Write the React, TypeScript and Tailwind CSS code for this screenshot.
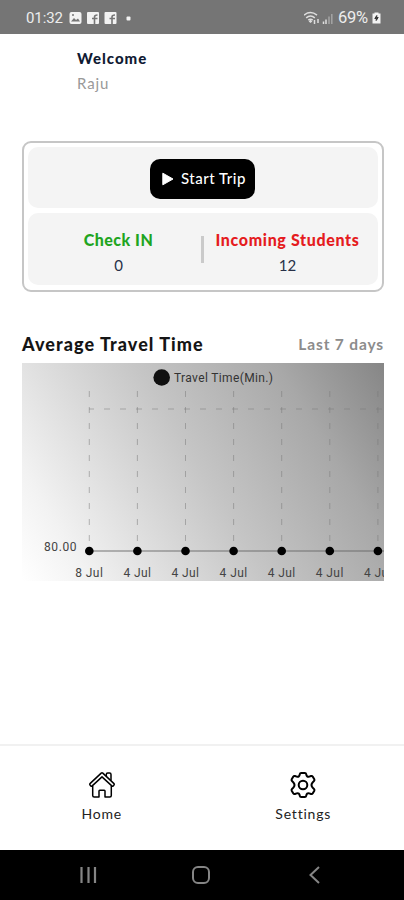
import React from "react";

const points = ["8 Jul", "4 Jul", "4 Jul", "4 Jul", "4 Jul", "4 Jul", "4 Jul"];

const StatusBar = () => (
    <header className="flex h-[33.5px] shrink-0 items-center justify-between bg-[#757575] pl-[26px] pr-[23px] pt-[3px] text-[#ededed]">
        <div className="flex items-center">
            <span className="w-[43px] font-['Roboto'] text-[15px] tracking-[-0.1px]">01:32</span>
            <svg width="62" height="14" viewBox="0 0 62 14" fill="#f2f2f2">
                <rect x="0.5" y="1" width="12" height="12" rx="2" />
                <path d="M2 10.5 L5 7 L7 9 L9 7.5 L11 10.5 Z" fill="#757575" />
                <circle cx="4" cy="4" r="1" fill="#757575" />
                <rect x="18" y="1" width="12" height="12" rx="1" />
                <path d="M25.5 13 V6 Q25.5 4 28.5 4 M23 7.5 H28.5" fill="none" stroke="#757575" strokeWidth="1.6" />
                <rect x="35.5" y="1" width="12" height="12" rx="1" />
                <path d="M43 13 V6 Q43 4 46 4 M40.5 7.5 H46" fill="none" stroke="#757575" strokeWidth="1.6" />
                <rect x="57.5" y="5.5" width="4" height="4" rx="1" />
            </svg>
        </div>
        <div className="flex items-center">
            <svg width="35" height="16" viewBox="0 0 35 16" fill="none" stroke="#dedede" strokeWidth="1.5">
                <path d="M0 5.2 Q6.5 0 13 5.2 M2.2 7.8 Q6.5 4.2 10.8 7.8 M4.3 10.2 Q6.5 8.4 8.7 10.2" />
                <path d="M6.5 9.5 L8.3 11.4 L6.5 13 L4.7 11.4 Z" fill="#dedede" stroke="none" />
                <path d="M10.5 10 V14 M14 9 V13" />
                <path d="M19.5 11.5 V14 M22 9.5 V14" />
                <path d="M25 6.5 V14 M27.8 4 V14" stroke="#a5a5a5" />
            </svg>
            <span className="-ml-px w-[34px] font-['Roboto'] text-[16.5px] tracking-[-0.3px]">69%</span>
            <svg width="9" height="12" viewBox="0 0 9 12">
                <path d="M2.5 0.5 H6.5 V1.5 H8.5 V11.5 H0.5 V1.5 H2.5 Z" fill="#f2f2f2" />
                <path d="M4.8 3.5 L2.8 6.5 H4.4 L4.2 8.5 L6.2 5.5 H4.6 Z" fill="#333" stroke="#333" />
            </svg>
        </div>
    </header>
);

const TravelChart = () => (
    <svg className="block" width="362" height="218" viewBox="0 0 362 218" fontFamily="Roboto, sans-serif" fontSize="12">
        <defs>
            <linearGradient id="chartBg" gradientUnits="userSpaceOnUse" x1="0" y1="218" x2="362" y2="0">
                <stop offset="0" stopColor="#ffffff" />
                <stop offset="0.14" stopColor="#f2f2f2" />
                <stop offset="0.5" stopColor="#c5c5c5" />
                <stop offset="0.78" stopColor="#a8a8a8" />
                <stop offset="1" stopColor="#868686" />
            </linearGradient>
        </defs>
        <rect width="362" height="218" fill="url(#chartBg)" />
        <circle cx="139.7" cy="14.5" r="8.3" fill="#101010" />
        <text x="152" y="18.5" textLength="99" fill="#333">Travel Time(Min.)</text>
        <path d="M67 46 H362" stroke="#777" strokeOpacity="0.5" strokeDasharray="6 10" strokeDashoffset="1" />
        {points.map((_, i) => (
            <path key={i} d={`M${67.3 + i * 48.1} 28 V188`} stroke="#777" strokeOpacity="0.5" strokeDasharray="6 10" />
        ))}
        <path d="M67 188 H362" stroke="#666" strokeOpacity="0.6" strokeWidth="1.6" />
        <text x="22" y="188" textLength="32.5" fill="#444">80.00</text>
        {points.map((label, i) => (
            <g key={i}>
                <circle cx={67.3 + i * 48.1} cy="188" r="4.3" fill="#000" />
                <text x={53.3 + i * 48.1} y="213.5" textLength="27.5" fill="#444">{label}</text>
            </g>
        ))}
    </svg>
);

const HomeIcon = () => (
    <svg width="28" height="28" viewBox="0 0 28 28" fill="none" stroke="#000" strokeWidth="1.5" strokeLinejoin="round">
        <path d="M13.2 2.1 Q14 1.5 14.8 2.1 L26 12.6 Q26.6 13.3 26 14 L25.2 14.9 Q24.5 15.5 23.8 14.9 L14 5.9 L4.2 14.9 Q3.5 15.5 2.8 14.9 L2 14 Q1.4 13.3 2 12.6 Z" />
        <path d="M4.7 15 V24.5 Q4.7 26 6.2 26 H11 V20 Q11 19.2 11.8 19.2 H16.2 Q17 19.2 17 20 V26 H21.8 Q23.3 26 23.3 24.5 V15" />
        <path d="M18.3 5.1 V3.6 Q18.3 2 19.7 2 H21.6 Q23 2 23 3.6 V9.4" />
    </svg>
);

const SettingsIcon = () => (
    <svg width="28" height="28" viewBox="0 0 28 28" fill="none" stroke="#000" strokeWidth="2" strokeLinejoin="round">
        <circle cx="14" cy="14" r="4.3" />
        <path d="M12.2 2 H15.8 Q17 2 17.2 3.2 Q17.6 6.4 20.3 5.6 L22 5 Q23.2 4.7 23.8 5.7 L25.3 8.3 Q25.8 9.3 25 10.1 L23.8 11.2 Q21.2 14 23.8 16.8 L25 17.9 Q25.8 18.7 25.3 19.7 L23.8 22.3 Q23.2 23.3 22 23 L20.3 22.4 Q17.6 21.6 17.2 24.8 Q17 26 15.8 26 H12.2 Q11 26 10.8 24.8 Q10.4 21.6 7.7 22.4 L6 23 Q4.8 23.3 4.2 22.3 L2.7 19.7 Q2.2 18.7 3 17.9 L4.2 16.8 Q6.8 14 4.2 11.2 L3 10.1 Q2.2 9.3 2.7 8.3 L4.2 5.7 Q4.8 4.7 6 5 L7.7 5.6 Q10.4 6.4 10.8 3.2 Q11 2 12.2 2 Z" />
    </svg>
);

const App = () => {
    return (
        <div className="flex h-[900px] w-[404px] flex-col overflow-hidden bg-white font-['Lato',sans-serif]">
            <StatusBar />

            <main className="flex-1 pl-[22px] pr-5">
                <div className="pl-[55px] pt-[14px]">
                    <h1 className="text-[15px] font-black leading-5 tracking-[1px] text-[#101a33]">Welcome</h1>
                    <p className="mt-[5px] text-[15px] leading-5 tracking-[0.9px] text-[#999]">Raju</p>
                </div>

                <section className="mt-[48.5px] h-[151px] rounded-[9px] border-2 border-[#c6c6c6] px-1 pt-1">
                    <div className="flex h-[61px] items-center rounded-[10px] bg-[#f4f4f4] pl-[122px] pt-0.5">
                        <button className="flex h-10 w-[105px] items-center rounded-[10px] bg-black pl-3 text-white">
                            <svg width="12" height="14" viewBox="0 0 12 14">
                                <path d="M0.8 1.2 L11 7 L0.8 12.8 Z" fill="#fff" stroke="#fff" strokeLinejoin="round" />
                            </svg>
                            <span className="ml-[7px] whitespace-nowrap text-[15px] font-medium tracking-[0.5px]">Start Trip</span>
                        </button>
                    </div>
                    <div className="mt-[5px] flex h-[72px] items-center rounded-[10px] bg-[#f4f4f4] pt-1">
                        <div className="w-[173px] pl-[8px] pt-1 text-center">
                            <div className="text-[16px] font-black leading-6 tracking-[0.5px] text-[#1fa51f]">Check IN</div>
                            <div className="text-[15px] leading-[26px] text-[#273047]">0</div>
                        </div>
                        <div className="mb-1 h-[27px] w-[3px] shrink-0 bg-[#cacaca]" />
                        <div className="flex-1 pr-[7px] pt-1 text-center">
                            <div className="whitespace-nowrap text-[16px] font-black leading-6 tracking-[0.65px] text-[#e51b20]">Incoming Students</div>
                            <div className="text-[15px] leading-[26px] text-[#273047]">12</div>
                        </div>
                    </div>
                </section>

                <div className="mt-10 flex h-[31px] items-start justify-between whitespace-nowrap leading-6">
                    <h2 className="text-[18px] font-black tracking-[1.05px] text-[#151515]">Average Travel Time</h2>
                    <span className="text-[15.5px] font-bold tracking-[0.85px] text-[#8c8c8c]">Last 7 days</span>
                </div>
                <TravelChart />
            </main>

            <nav className="grid h-[106px] shrink-0 grid-cols-2 border-t-2 border-[#f1f1f1] pl-px pt-[25px] text-[14px] text-[#222]">
                <div className="flex flex-col items-center">
                    <HomeIcon />
                    <span className="mt-[3px] leading-6 tracking-[0.8px]">Home</span>
                </div>
                <div className="flex flex-col items-center">
                    <SettingsIcon />
                    <span className="mt-[3px] leading-6 tracking-[0.8px]">Settings</span>
                </div>
            </nav>

            <footer className="flex h-[50px] shrink-0 items-center bg-black pl-[79px]">
                <svg width="20" height="18" viewBox="0 0 20 18" stroke="#858585" strokeWidth="2.2">
                    <path d="M2.5 1 V17 M9.5 1 V17 M16 1 V17" />
                </svg>
                <svg className="ml-[92px]" width="20" height="20" viewBox="0 0 20 20" fill="none" stroke="#858585" strokeWidth="2">
                    <rect x="2" y="2" width="16" height="16" rx="5" />
                </svg>
                <svg className="ml-[96px]" width="16" height="20" viewBox="0 0 16 20" fill="none" stroke="#858585" strokeWidth="2">
                    <path d="M12 2 L3.5 10 L12 18" />
                </svg>
            </footer>
        </div>
    );
};

export default App;
